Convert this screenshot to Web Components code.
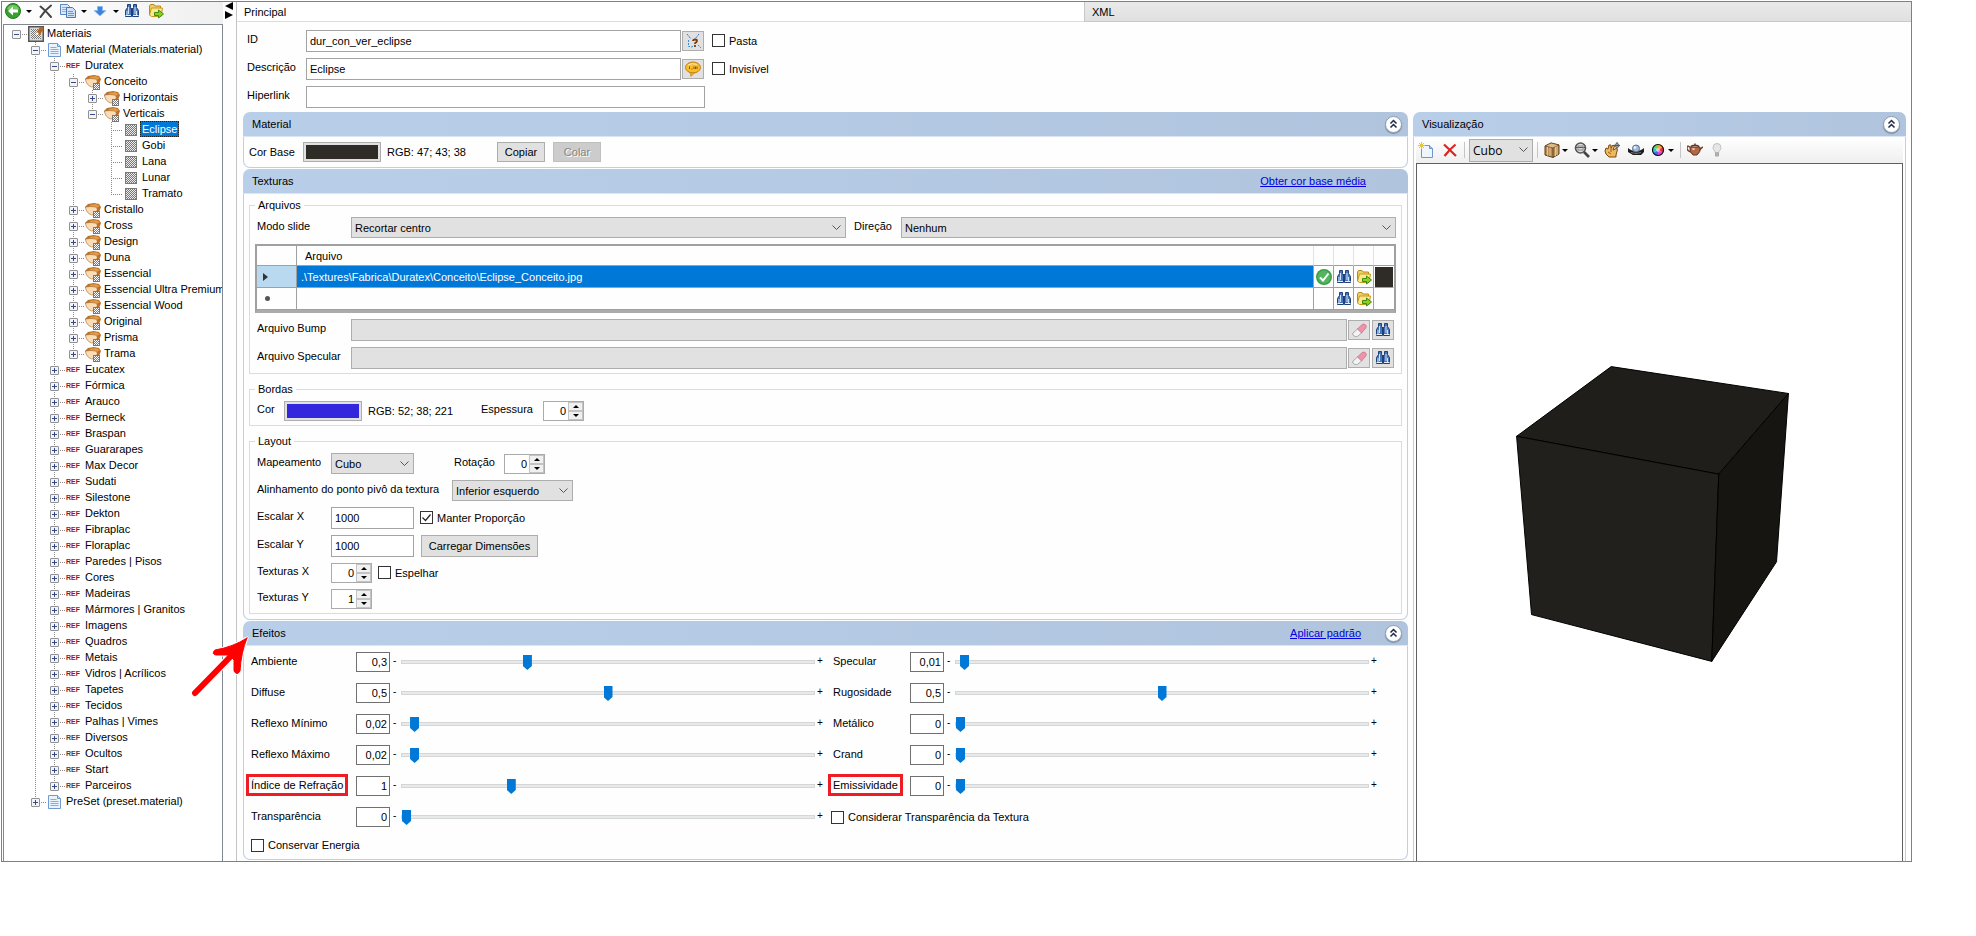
<!DOCTYPE html>
<html lang="pt-BR">
<head>
<meta charset="utf-8">
<title>Editor de materiais</title>
<style>
  html { background: #fff; }
  body { margin: 1px 64px 0 1px; font: 11px/14px "Liberation Sans", Arial, sans-serif; color: #000; }
</style>
</head>
<body>
<material-app></material-app>
<script>
const BINOCULARS = `<path d="M3.500 1.500h3v3l1 2v7h-6v-6l2-3z" fill="#4a76b8" stroke="#1d3f7a"/><path d="M9.500 1.500h3v3l2 3v6h-6v-7l1-2z" fill="#4a76b8" stroke="#1d3f7a"/><path d="M7 5h2v4H7z" fill="#1d3f7a"/><path d="M3 8v4M4.500 4v7M11 4v7M12.500 8v4" stroke="#cfe0f8" fill="none"/><path d="M1.500 12.500h5.500M9 12.500h5.500" stroke="#e8f0fb"/>`;
const FOLDER = `<path d="M1.500 12V3l1-1.500h3.500l1 1.500h5.500v9z" fill="#f0cf62" stroke="#b88a17"/><path d="M3.500 13.500l-2-1.500 2-7h11l-1.500 8.500z" fill="#fbe78d" stroke="#c59a20"/><path d="M6.500 9.500h4V7l5 4-5 4v-2.500h-4z" fill="#8bd01e" stroke="#3f8a10"/>`;
const CHECKER = `<g fill="#7d7d7d">` + Array.from({ length: 30 }, (_, i) => {
  const r = i % 6, c = Math.floor(i / 6); return `<rect x="${9 + r}" y="${10 + c}" width="1" height="1" opacity="${(r + c) % 2 ? 1 : 0}"/>`; }).join("") + `</g>`;
const ICONS = {
  back: `<circle cx="8" cy="8" r="7.500" fill="#35a12c" stroke="#1f7a1c"/><path d="M2 6a6.500 6.500 0 0 1 12 0q-6 3-12 0z" fill="#8fdc7c" opacity=".7"/><path d="M3 8l5-4.500v3h5v3H8v3z" fill="#fff"/>`,
  cross: `<path d="M2.500 3.500Q7 7 13 14M13 2.500Q7 7 2.500 14" stroke="#454545" stroke-width="2" fill="none" stroke-linecap="round"/>`,
  copy: `<path d="M.5 1.500h7l2 2v8h-9z" fill="#dce9fb" stroke="#5c87c4"/><path d="M2 4.500h5M2 6.500h6M2 8.500h6" stroke="#8fb0dc"/><path d="M6.500 4.500h6l3 3v7h-9z" fill="#cfe1f9" stroke="#4a78ba"/><path d="M8 8.500h5M8 10.500h6M8 12.500h6" stroke="#6f97cf"/>`,
  down: `<path d="M5.500 3.500h5v4h3.500L8 13 2 7.500h3.500z" fill="#3c84dc" stroke="#8dbbee"/>`,
  binoculars: BINOCULARS,
  folder: FOLDER,
  root: `<rect x=".75" y=".75" width="14.500" height="14.500" fill="#d8d8d8" stroke="#555" stroke-width="1.500"/><rect x="3" y="3" width="10" height="10" fill="url(#p)"/><path d="M8 7l4-6 4 1-4 7z" fill="#b5651d"/><path d="M7 9l2-3 2 2z" fill="#fff"/>`,
  doc: `<path d="M1.500 1.500h9l3 3v10h-12z" fill="#e9f2fd" stroke="#6f9bd0"/><path d="M10.500 1.500v3h3" fill="#b9d3f0" stroke="#6f9bd0"/><path d="M3.500 5.500h6M3.500 7.500h8M3.500 9.500h8M3.500 11.500h8" stroke="#86aedb"/>`,
  folderTex: `<path d="M0 5l3-3 6-1 5 1 2 3-2 5-6 2-5-2z" fill="#b8702a"/><path d="M4 3l7-1 4 2-5 3z" fill="#e39a45"/><path d="M.5 5q5-1 10 0l2 2-2 5-4 1Q1 11 .5 5z" fill="#fbdcb6" stroke="#a5682a" stroke-width=".6"/><rect x="8.500" y="9.500" width="6" height="6" fill="#fff" stroke="#777"/>${CHECKER}`,
  tex: `<rect x="2.500" y="2.500" width="11" height="11" fill="url(#p)" stroke="#7a7a7a"/>`,
  id: `<path d="M2 1l4 5M14 1l-4 5" stroke="#3c6fc0" stroke-dasharray="2 1" fill="none"/><path d="M3.500 7v6.500h3M13 12l3 3M8 13l-2 2" stroke="#3c8fd0" stroke-dasharray="2 1" fill="none"/><path d="M8 8q0-1.500 2-1.500T12 8q0 1-2 2.200v.8M10 12v2" stroke="#7a3b12" stroke-width="1.800" fill="none"/>`,
  speech: `<ellipse cx="8" cy="6.500" rx="7.500" ry="5.500" fill="#f7bd2d" stroke="#c07f12"/><path d="M5 11.500l1 4 4-4z" fill="#f0a91f" stroke="#c07f12" stroke-width=".6"/><path d="M3 4q4-2.500 9-.5" stroke="#fde9a4" fill="none"/><path d="M4.500 8V5.500M6.500 8h1M9 8V5.500M10.500 8V5.500M12 8V5.500" stroke="#9c4a10"/>`,
  ok: `<circle cx="8" cy="8" r="8" fill="#36a045"/><circle cx="8" cy="8" r="6.500" fill="#55b35f"/><path d="M4 8.500l3 3 5.500-7" stroke="#fff" stroke-width="2" fill="none"/>`,
  eraser: `<path d="M2 11l5-4.500 4 4L7 14q-1 1-3 .5L2 13q-1-1 0-2z" fill="#f3f3f3" stroke="#999" stroke-width=".8"/><path d="M6.500 7L11 2.500q2-1 3.500.3t.3 3.200L10.500 11z" fill="#ee93a8" stroke="#bd7a8a" stroke-width=".8"/>`,
  fresh: `<path d="M3.500 3.500h8l3 3v9h-11z" fill="#eef5fe" stroke="#6d96cc"/><path d="M11.500 3.500v3h3" fill="#9fc0ea" stroke="#6d96cc"/><path d="M3.500 0v7M0 3.500h7M1 1l5 5M6 1L1 6" stroke="#e5c63a"/>`,
  remove: `<path d="M2 2.500Q8 8 14 14M13.500 2.500Q8 7 2.500 14" stroke="#dd2222" stroke-width="2.200" fill="none"/>`,
  box: `<path d="M1 4l6-3 8 2v9l-6 3.500L1 13z" fill="#b98d55" stroke="#5c4020"/><path d="M1 4l8 2 6-3-8-2z" fill="#e0bd86" stroke="#5c4020" stroke-width=".7"/><path d="M9 6v9.500" stroke="#5c4020"/><path d="M3.500 5v8.500M6 5.500V14M11.500 5v9M13 4v9" stroke="#e3c596"/>`,
  zoom: `<circle cx="6.500" cy="6" r="5" fill="#dcdcdc" stroke="#555" stroke-width="1.600"/><path d="M10 10l5 5" stroke="#444" stroke-width="2.600"/><path d="M2 5.500h9" stroke="#c22"/><rect x="4" y="4" width="5" height="4" fill="none" stroke="#888"/>`,
  hand: `<path d="M1 9l1-3 2 1 1-4 2 0 0 3 2-3 1.500 1L9 8l3-1.500 1.500 1L12 13v2H5l-3-3z" fill="#edb85f" stroke="#7a4a12"/><path d="M4 10l3 2M7 6l0 4" stroke="#9a6424" fill="none"/><path d="M13 0v7M9.500 3.500h6.500" stroke="#555" fill="none"/><circle cx="13" cy="3.500" r="2" fill="none" stroke="#666"/>`,
  orbit: `<path d="M0 6q3 3 8 3t8-3v4l-3 3H5L0 10z" fill="#1d1d1d"/><circle cx="8" cy="6.500" r="3.500" fill="#9fb9da" stroke="#57718f"/><circle cx="7" cy="5.500" r="1.300" fill="#eef5ff"/><path d="M3 10.500q5 2 10 0" stroke="#777" fill="none"/>`,
  wheel: `<path d="M8 8V2a6 6 0 0 1 5.200 3z" fill="#f7a23a"/><path d="M8 8l5.200-3a6 6 0 0 1 0 6z" fill="#ee3344"/><path d="M8 8l5.200 3A6 6 0 0 1 8 14z" fill="#d94adf"/><path d="M8 8v6a6 6 0 0 1-5.200-3z" fill="#4668f0"/><path d="M8 8l-5.200 3a6 6 0 0 1 0-6z" fill="#35c5c9"/><path d="M8 8L2.800 5A6 6 0 0 1 8 2z" fill="#6bd25c"/><circle cx="8" cy="8" r="2" fill="#fff" opacity=".5"/><circle cx="8" cy="8" r="5.500" fill="none" stroke="#111" stroke-width="1.200"/>`,
  teapot: `<path d="M3 5q-3-2-3 1t4 4M12 9q2-3 4-4" stroke="#7c4028" stroke-width="1.500" fill="none"/><path d="M3 5h10q1 5-3 8H6Q2 10 3 5z" fill="#b06a48" stroke="#6b3520"/><path d="M4 4.500q4-2.500 8 0M8 1.500v1.500" stroke="#6b3520" stroke-width="1.500" fill="none"/><ellipse cx="6.500" cy="7" rx="1.500" ry="1" fill="#eec4aa"/>`,
  bulb: `<path d="M8 1.500q4 0 4 4 0 2-2 4v1H6v-1Q4 7.500 4 5.500q0-4 4-4z" fill="#e6e6e6" stroke="#c0c0c0"/><path d="M6.500 11h3v3h-3z" fill="#b5b5b5" stroke="#a5a5a5"/>`,
};
const CHECKER_DEF = `<defs><pattern id="p" width="2" height="2" patternUnits="userSpaceOnUse"><rect width="2" height="2" fill="#ececec"/><rect width="1" height="1" fill="#777"/><rect x="1" y="1" width="1" height="1" fill="#777"/></pattern></defs>`;

const CHEVRON = `url("data:image/svg+xml,%3Csvg xmlns='http://www.w3.org/2000/svg' width='9' height='6'%3E%3Cpath d='M.5 .5l4 4 4-4' fill='none' stroke='%23555'/%3E%3C/svg%3E")`;
const TICK = `url("data:image/svg+xml,%3Csvg xmlns='http://www.w3.org/2000/svg' width='11' height='11'%3E%3Cpath d='M1.500 5.500l3 3 5-6' fill='none' stroke='%23222' stroke-width='1.200'/%3E%3C/svg%3E")`;

const CONTROLS = `
  * { box-sizing: border-box; }
  input, select, button { font: inherit; color: inherit; margin: 0; border-radius: 0; }
  input[type=text] { height: 22px; min-width: 0; padding: 0 3px; border: 1px solid #a3a3a3; background: #fff; outline: 0; }
  input[type=text]:disabled { background: #e1e1e1; border-color: #adadad; }
  select { appearance: none; height: 21px; min-width: 0; padding: 0 20px 0 3px; border: 1px solid #adadad;
    background: #e1e1e1 ${CHEVRON} no-repeat right 4px center; }
  button { height: 20px; padding: 0; border: 1px solid #adadad; background: #e1e1e1; }
  button:disabled { background: #ccc; border-color: #bfbfbf; color: #838383; text-shadow: 1px 1px #fff; }
  button.icon { width: 22px; display: grid; place-items: center; }
  input[type=checkbox] { appearance: none; width: 13px; height: 13px; border: 1px solid #333; background: #fff; flex: none; }
  input[type=checkbox]:checked { background: #fff ${TICK} center no-repeat; }
  input[type=color] { appearance: none; width: 78px; height: 20px; padding: 2px; border: 1px solid #adadad; background: #e1e1e1; }
  input[type=color]::-webkit-color-swatch-wrapper { padding: 0; }
  input[type=color]::-webkit-color-swatch { border: 0; border-radius: 0; }
  .check { display: flex; align-items: center; gap: 4px; white-space: nowrap; }
  .row { display: flex; align-items: center; }
  .row > label:not(.check) { padding-bottom: 4px; white-space: nowrap; flex: none; }
  a { color: #0000e0; }
`;

function define(name, css, html, setup) {
  const tpl = document.createElement("template");
  customElements.define(name, class extends HTMLElement {
    connectedCallback() {
      if (this.shadowRoot) return;
      const root = this.attachShadow({ mode: "open" });
      tpl.innerHTML = `<style>${css}</style>${typeof html === "function" ? html(this) : html}`;
      root.append(tpl.content.cloneNode(true));
      if (setup) setup(this, root);
    }
  });
}
const attr = (el, name, fallback = "") => el.getAttribute(name) ?? fallback;

define("ui-icon",
  `:host { display: block; width: 16px; height: 16px; flex: none; } svg { display: block; }`,
  el => `<svg width="16" height="16" viewBox="0 0 16 16" aria-hidden="true">${CHECKER_DEF}${ICONS[attr(el, "name")]}</svg>`);

/* Small button of a tool bar, with an optional drop-down arrow */
define("tool-button",
  `:host { display: flex; align-items: center; flex: none; }
   button { display: flex; align-items: center; gap: var(--arrow-gap, 5px); padding: 0; border: 0; background: none; }
   i { width: 0; border: 3px solid transparent; border-top-color: #000; border-bottom: 0; }`,
  el => `<button type="button" aria-label="${attr(el, "label")}"><ui-icon name="${attr(el, "icon")}"></ui-icon>${el.hasAttribute("menu") ? "<i></i>" : ""}</button>`);

define("collapse-button",
  `:host { display: block; }
   button { display: grid; place-items: center; width: 17px; height: 17px; padding: 0; border: 1px solid #8f9db0; border-radius: 50%; background: #fff; box-shadow: 0 1px 1px #7d8ca3; }`,
  `<button type="button" aria-label="Recolher"><svg width="9" height="10" viewBox="0 0 9 10"><path d="M1.500 4.500l3-3 3 3M1.500 8.500l3-3 3 3" fill="none" stroke="#1c2a44" stroke-width="1.500"/></svg></button>`);

/* Panel with a blue title bar */
define("panel-box",
  `:host { display: flex; flex-direction: column; box-sizing: border-box; }
   header { display: flex; align-items: center; box-sizing: border-box; height: 25px; padding: 0 6px 0 9px; border-bottom: 1px solid #dce6f2;
     border-radius: 7px 7px 0 0; background: linear-gradient(90deg, #b9cfe9, #b0c4de); }
   h2 { margin: 0; font: inherit; flex: 1; }
   .body { flex: 1; display: flex; flex-direction: column; border: 1px solid #bdd0e4; border-top: 0; border-radius: 0 0 7px 7px; }
   :host([flush]) .body { border-bottom: 0; border-radius: 0; }
   .end { width: 17px; margin-left: 24px; }
   :host([fixed]) .end { margin-left: 19px; }`,
  el => `<header><h2>${attr(el, "heading")}</h2><slot name="link"></slot><div class="end">${el.hasAttribute("fixed") ? "" : "<collapse-button></collapse-button>"}</div></header><div class="body"><slot></slot></div>`);

/* Framed group with a legend */
define("group-box",
  `fieldset { min-width: 0; margin: 0; padding: 5px 5px 4px; border: 1px solid #dcdcdc; display: block; }
   :host { display: block; }
   legend { padding: 0 3px; margin: 0; }
   .rows { display: flex; flex-direction: column; gap: 6px; }`,
  el => `<fieldset><legend>${attr(el, "legend")}</legend><div class="rows"><slot></slot></div></fieldset>`);

define("spin-box",
  `${CONTROLS}
   :host { display: flex; align-items: center; height: 20px; }
   label { width: var(--label-width, auto); padding-bottom: 4px; flex: none; }
   .box { display: flex; width: 41px; height: 20px; border: 1px solid #ababab; background: #fff; }
   .box input { flex: 1; height: 18px; border: 0; padding: 0 2px 0 0; text-align: right; }
   .steps { display: grid; grid-template-rows: 1fr 1fr; width: 15px; }
   .steps button { display: grid; place-items: center; height: 9px; border: 1px solid #c3c3c3; background: #f0f0f0; }
   i { width: 0; border: 3px solid transparent; }
   .u { border-top: 0; border-bottom-color: #000; } .d { border-bottom: 0; border-top-color: #000; }`,
  el => `<label for="v">${attr(el, "label")}</label><div class="box"><input id="v" type="text" value="${attr(el, "value")}"><div class="steps"><button type="button" aria-label="Aumentar"><i class="u"></i></button><button type="button" aria-label="Diminuir"><i class="d"></i></button></div></div>`,
  (el, root) => {
    const input = root.querySelector("input");
    root.querySelectorAll("button").forEach((b, i) => b.onclick = () => { input.value = +input.value + (i ? -1 : 1); });
  });

/* Label, value box and slider of one effect */
define("effect-slider",
  `${CONTROLS}
   :host { display: flex; align-items: center; height: 20px; }
   .name { width: var(--name-width); flex: none; padding-bottom: 2px; }
   :host([marked]) label { outline: 3px solid #ee1c24; outline-offset: 2px; }
   label { white-space: nowrap; }
   input[type=text] { width: 34px; height: 20px; flex: none; border-color: #707070; text-align: right; padding: 0 2px; }
   .sign { width: 11px; flex: none; padding: 0 0 3px 3px; font-size: 10px; } .plus { width: 7px; padding-left: 2px; }
   input[type=range] { appearance: none; flex: 1; min-width: 0; height: 20px; background: none; }
   input[type=range]::-webkit-slider-runnable-track { height: 4px; border: 1px solid #d6d6d6; background: #e7eaea; }
   input[type=range]::-webkit-slider-thumb { appearance: none; width: 9px; height: 15px; margin-top: -6px; background: #0078d7;
     clip-path: polygon(0 0, 100% 0, 100% 73%, 50% 100%, 0 73%); }`,
  el => `<span class="name"><label for="v">${attr(el, "label")}</label></span><input id="v" type="text" value="${attr(el, "value")}"><span class="sign">-</span><input type="range" min="0" max="100" value="${attr(el, "at")}" aria-label="${attr(el, "label")}"><span class="sign plus">+</span>`);

define("tree-item",
  `:host { display: block; --dots: linear-gradient(#8a8a8a 50%, transparent 0) 0 0 / 1px 2px; white-space: nowrap; }
   :host(:not([last])) { background: linear-gradient(#8a8a8a 50%, transparent 0) 9px 0 / 1px 2px repeat-y; }
   .row { display: flex; height: 16px; align-items: center; }
   .cell { display: grid; width: 19px; height: 16px; margin-right: 2px; place-items: center; flex: none; }
   .cell > * { grid-area: 1 / 1; }
   .v { place-self: start; width: 1px; height: 8px; margin-left: 9px; background: var(--dots); }
   :host([root]) .v { visibility: hidden; }
   .h { place-self: start end; width: 12px; height: 1px; margin: 8px -2px 0 0; background: linear-gradient(90deg, #8a8a8a 50%, transparent 0) 0 0 / 2px 1px; }
   button { box-sizing: border-box; width: 9px; height: 9px; padding: 0; border: 1px solid #919191; border-radius: 1px; background:
     linear-gradient(#334a8c, #334a8c) center / 5px 1px no-repeat, linear-gradient(#334a8c, #334a8c) center / 1px var(--plus, 5px) no-repeat, #f4f4f4; margin: 1px 0 0; z-index: 1; }
   :host([open]) button { --plus: 1px; }
   .ref { width: 16px; font-size: 7px; line-height: 16px; color: #a8101c; flex: none; font-weight: bold; }
   .ref.dark { color: #444; }
   .text { margin: 0 0 2px 1px; padding: 0 2px; line-height: 16px; }
   :host([selected]) .text { background: #0078d7; color: #fff; outline: 1px dotted #222; outline-offset: -1px; }
   .kids { margin-left: 19px; }`,
  el => {
    const icon = attr(el, "icon");
    const picture = icon.startsWith("ref") ? `<span class="ref ${icon === "ref" ? "" : "dark"}">REF</span>` : `<ui-icon name="${icon}"></ui-icon>`;
    return `<div class="row"><span class="cell"><i class="v"></i><i class="h"></i>${el.hasAttribute("leaf") ? "" : `<button type="button" aria-label="Expandir"></button>`}</span>${picture}<span class="text">${attr(el, "label")}</span></div><div class="kids"><slot></slot></div>`;
  });

define("material-tree",
  `:host { display: block; flex: 1; border: 1px solid #828790; border-bottom: 0; background: #fff; padding: 1px 0 8px 3px; overflow: hidden; min-width: 0; }`,
  "", (el, root) => {
    const add = (parent, list) => list.forEach((n, i) => {
      const [label, icon, kids, flags = ""] = n;
      const item = document.createElement("tree-item");
      item.setAttribute("label", label);
      item.setAttribute("icon", icon);
      if (i === list.length - 1) item.setAttribute("last", "");
      if (kids) { item.setAttribute("open", ""); add(item, kids); }
      flags.split(" ").filter(Boolean).forEach(f => item.setAttribute(f, ""));
      parent.append(item);
    });
    const many = (icon, names, flags) => names.map(n => [n, icon, null, flags]);
    const leaves = many("tex", ["Eclipse", "Gobi", "Lana", "Lunar", "Tramato"], "leaf");
    leaves[0][3] = "leaf selected";
    add(root, [["Materiais", "root", [
      ["Material (Materials.material)", "doc", [
        ["Duratex", "ref", [
          ["Conceito", "folderTex", [["Horizontais", "folderTex"], ["Verticais", "folderTex", leaves]]],
          ...many("folderTex", ["Cristallo", "Cross", "Design", "Duna", "Essencial", "Essencial Ultra Premium", "Essencial Wood", "Original", "Prisma", "Trama"]),
        ]],
        ...many("ref", ["Eucatex", "Fórmica", "Arauco", "Berneck", "Braspan", "Guararapes", "Max Decor", "Sudati", "Silestone", "Dekton", "Fibraplac", "Floraplac", "Paredes | Pisos", "Cores", "Madeiras", "Mármores | Granitos", "Imagens", "Quadros", "Metais", "Vidros | Acrílicos", "Tapetes", "Tecidos", "Palhas | Vimes"]),
        ...many("refDark", ["Diversos", "Ocultos", "Start", "Parceiros"]),
      ]],
      ["PreSet (preset.material)", "doc"],
    ], "root"]]);
  });

define("side-panel",
  `:host { display: flex; flex-direction: column; min-width: 0; }
   nav { display: flex; align-items: center; box-sizing: border-box; height: 22px; padding: 0 2px 4px; background: linear-gradient(90deg, #fff, #f0f0f0); }
   .a { margin-right: 6px; } .c { margin-right: 5px; } .d { margin-right: 8px; }`,
  `<nav><tool-button icon="back" menu label="Adicionar" class="a"></tool-button><tool-button icon="cross" label="Excluir" class="a"></tool-button><tool-button icon="copy" menu label="Copiar" class="c"></tool-button><tool-button icon="down" menu label="Mover" class="c"></tool-button><tool-button icon="binoculars" label="Localizar" class="d"></tool-button><tool-button icon="folder" label="Abrir"></tool-button></nav><material-tree></material-tree>`);

define("identity-form",
  `${CONTROLS}
   :host { display: grid; gap: 6px; padding: 8px 10px 4px; }
   .row > label:not(.check) { width: 59px; }
   .row > label.check { padding-bottom: 1px; }
   input[type=text] { width: 375px; }
   input[type=text].wide { width: 399px; }
   button.icon { margin: 0 8px 0 1px; }`,
  `<div class="row"><label for="id">ID</label><input type="text" id="id" value="dur_con_ver_eclipse"><button type="button" class="icon" aria-label="Gerar ID"><ui-icon name="id"></ui-icon></button><label class="check"><input type="checkbox">Pasta</label></div>
   <div class="row"><label for="de">Descrição</label><input type="text" id="de" value="Eclipse"><button type="button" class="icon" aria-label="Traduções"><ui-icon name="speech"></ui-icon></button><label class="check"><input type="checkbox">Invisível</label></div>
   <div class="row"><label for="hi">Hiperlink</label><input type="text" id="hi" class="wide"></div>`);

define("material-section",
  `${CONTROLS}
   :host { display: block; }
   .row { padding: 5px; } .row > label:not(.check) { width: 54px; padding: 0; }
   output { width: 116px; padding-left: 6px; }
   button { width: 48px; margin-right: 8px; }`,
  `<panel-box heading="Material"><div class="row"><label for="c">Cor Base</label><input type="color" id="c" value="#2f2b26"><output for="c">RGB: 47; 43; 38</output><button type="button">Copiar</button><button type="button" disabled>Colar</button></div></panel-box>`);

define("file-table",
  `${CONTROLS}
   :host { display: block; border: 2px solid #a0a0a0; border-bottom: 3px solid #ababab; }
   table { width: 100%; table-layout: fixed; border-collapse: separate; border-spacing: 0; }
   th, td { height: 22px; padding: 0 0 0 4px; border: solid #a0a0a0; border-width: 0 1px 1px 0; text-align: left; font-weight: normal; }
   thead th { height: 20px; padding-left: 8px; } thead th:nth-child(n+2) { border-right-color: #e2e2e2; }
   tr > :last-child { border-right: 0; }
   td.t { padding: 0; }
   td.t button { display: grid; place-items: center; width: 19px; height: 21px; border: 0; background: none; }
   .sel th { background: #b9d9f1; } .sel .f { background: #0078d7; color: #fff; }
   .sel .color { background: #2f2b26; border: 1px solid #fff; border-bottom-color: #a0a0a0; }
   .arrow { display: block; width: 0; border: 4px solid transparent; border-left: 5px solid #333; border-right: 0; margin-left: 2px; }
   .star { display: block; width: 5px; height: 5px; border-radius: 50%; background: #555; margin-left: 4px; }`,
  () => {
    const tools = `<td class="t"><button type="button" aria-label="Localizar"><ui-icon name="binoculars"></ui-icon></button></td><td class="t"><button type="button" aria-label="Abrir pasta"><ui-icon name="folder"></ui-icon></button></td>`;
    return `<table><colgroup><col style="width:40px"><col><col style="width:20px"><col style="width:20px"><col style="width:20px"><col style="width:20px"></colgroup>
    <thead><tr><th></th><th>Arquivo</th><th></th><th></th><th></th><th></th></tr></thead>
    <tbody><tr class="sel"><th><i class="arrow"></i></th><td class="f">.\\Textures\\Fabrica\\Duratex\\Conceito\\Eclipse_Conceito.jpg</td><td class="t"><button type="button" aria-label="Válido"><ui-icon name="ok"></ui-icon></button></td>${tools}<td class="color"></td></tr>
    <tr><th><i class="star"></i></th><td></td><td></td>${tools}<td></td></tr></tbody></table>`;
  });

define("textures-section",
  `${CONTROLS}
   :host { display: block; }
   .groups { display: grid; gap: 8px; padding: 4px 5px 5px; }
   .row > label.n:not(.check) { width: 96px; padding-left: 2px; }
   .grow { flex: 1; }
   .file .icon + .icon { margin-left: 2px; } .file input { margin-right: 1px; } .file { padding-right: 2px; }
   .row > label.dir { margin: 0 10px 0 8px; width: 37px; }
   .row > label.m:not(.check) { width: 76px; padding-left: 2px; }
   .row > label.piv:not(.check) { width: 197px; padding-left: 2px; }
   .row > label.cor:not(.check) { width: 29px; padding-left: 2px; }
   output { width: 119px; padding-left: 6px; }
   .short { width: 83px; margin-right: 6px; }
   .pivot { width: 121px; }
   .load { width: 117px; height: 22px; margin-left: 1px; }
   .row > label.check { padding-bottom: 1px; }
   spin-box.first { --label-width: 74px; padding: 0 6px 0 2px; }
   spin-box.esp { --label-width: 62px; } spin-box.rot { --label-width: 50px; margin-left: 34px; }`,
  `<panel-box heading="Texturas" fixed>
    <a slot="link" href="#media">Obter cor base média</a>
    <div class="groups">
      <group-box legend="Arquivos">
        <div class="row"><label class="n" for="modo">Modo slide</label><select id="modo" class="grow"><option>Recortar centro</option></select><label class="dir" for="dir">Direção</label><select id="dir" class="grow"><option>Nenhum</option></select></div>
        <file-table></file-table>
        <div class="row file"><label class="n" for="bump">Arquivo Bump</label><input type="text" id="bump" class="grow" disabled><button type="button" class="icon" aria-label="Limpar"><ui-icon name="eraser"></ui-icon></button><button type="button" class="icon" aria-label="Localizar"><ui-icon name="binoculars"></ui-icon></button></div>
        <div class="row file"><label class="n" for="spec">Arquivo Specular</label><input type="text" id="spec" class="grow" disabled><button type="button" class="icon" aria-label="Limpar"><ui-icon name="eraser"></ui-icon></button><button type="button" class="icon" aria-label="Localizar"><ui-icon name="binoculars"></ui-icon></button></div>
      </group-box>
      <group-box legend="Bordas">
        <div class="row"><label class="cor" for="cor">Cor</label><input type="color" id="cor" value="#3426dd"><output for="cor">RGB: 52; 38; 221</output><spin-box class="esp" label="Espessura" value="0"></spin-box></div>
      </group-box>
      <group-box legend="Layout">
        <div class="row"><label class="m" for="map">Mapeamento</label><select id="map" class="short"><option>Cubo</option></select><spin-box class="rot" label="Rotação" value="0"></spin-box></div>
        <div class="row"><label class="piv" for="piv">Alinhamento do ponto pivô da textura</label><select id="piv" class="pivot"><option>Inferior esquerdo</option></select></div>
        <div class="row"><label class="m" for="ex">Escalar X</label><input type="text" id="ex" class="short" value="1000"><label class="check"><input type="checkbox" checked>Manter Proporção</label></div>
        <div class="row"><label class="m" for="ey">Escalar Y</label><input type="text" id="ey" class="short" value="1000"><button type="button" class="load">Carregar Dimensões</button></div>
        <div class="row"><spin-box class="first" label="Texturas X" value="0"></spin-box><label class="check"><input type="checkbox">Espelhar</label></div>
        <div class="row"><spin-box class="first" label="Texturas Y" value="1"></spin-box></div>
      </group-box>
    </div>
  </panel-box>`);

define("effects-section",
  `${CONTROLS}
   :host { display: block; position: relative; }
   .cols { display: flex; gap: 11px; padding: 6px 31px 7px 7px; }
   .cols > div { display: grid; gap: 11px; align-content: start; min-width: 0; }
   .l { --name-width: 105px; flex: 1 1 157px; } .r { --name-width: 77px; flex: 1 1 129px; }
   .check.six { height: 20px; margin-left: -2px; } .check.last { height: 14px; }
   .pointer { position: absolute; left: -52px; top: 14px; pointer-events: none; }`,
  `<panel-box heading="Efeitos">
    <a slot="link" href="#padrao">Aplicar padrão</a>
    <div class="cols">
      <div class="l">
        <effect-slider label="Ambiente" value="0,3" at="30"></effect-slider>
        <effect-slider label="Diffuse" value="0,5" at="50"></effect-slider>
        <effect-slider label="Reflexo Mínimo" value="0,02" at="2"></effect-slider>
        <effect-slider label="Reflexo Máximo" value="0,02" at="2"></effect-slider>
        <effect-slider label="Índice de Refração" value="1" at="26" marked></effect-slider>
        <effect-slider label="Transparência" value="0" at="0"></effect-slider>
        <label class="check last"><input type="checkbox">Conservar Energia</label>
      </div>
      <div class="r">
        <effect-slider label="Specular" value="0,01" at="1"></effect-slider>
        <effect-slider label="Rugosidade" value="0,5" at="50"></effect-slider>
        <effect-slider label="Metálico" value="0" at="0"></effect-slider>
        <effect-slider label="Crand" value="0" at="0"></effect-slider>
        <effect-slider label="Emissividade" value="0" at="0" marked></effect-slider>
        <label class="check six"><input type="checkbox">Considerar Transparência da Textura</label>
      </div>
    </div>
  </panel-box>
  <svg class="pointer" width="60" height="64" viewBox="0 0 60 64" aria-hidden="true"><g stroke="#fff" stroke-linecap="round" stroke-linejoin="round" fill="#fff"><path d="M4 58L42 19" stroke-width="8"/><path id="head" d="M56 3Q42 12 24 15Q20 19 25 20L38 20L43 25L43 36Q46 41 49 36Q50 18 56 3z" stroke-width="3"/></g><g fill="#f00" stroke="#f00" stroke-linecap="round"><path d="M4 58L42 19" stroke-width="6"/><path d="M56 3Q42 12 24 15Q20 19 25 20L38 20L43 25L43 36Q46 41 49 36Q50 18 56 3z" stroke-linejoin="round" stroke-width="1"/></g></svg>`);

define("preview-section",
  `${CONTROLS}
   :host { display: flex; }
   panel-box { flex: 1; min-width: 0; }
   .bar { display: flex; align-items: center; height: 26px; margin: 0 2px; padding: 0 2px; gap: 6px; background: linear-gradient(#fff, #efefef); --arrow-gap: 2px; }
   .wide { margin-right: 2px; }
   select { width: 64px; height: 23px; font: 12px "Open Sans", sans-serif; padding-right: 10px; margin: 0 -2px; }
   hr { width: 1px; height: 16px; margin: 0; border: 0; background: #c5c5c5; }
   .view { flex: 1; display: flex; margin: 0 2px; border: 1px solid #606060; border-bottom: 0; background: #fff; min-height: 300px; }
   svg.cube { flex: 1; width: 100%; height: 0; min-height: 100%; }`,
  `<panel-box heading="Visualização" flush>
    <div class="bar">
      <tool-button icon="fresh" label="Novo" class="wide"></tool-button><tool-button icon="remove" label="Remover"></tool-button><hr>
      <select aria-label="Forma"><option>Cubo</option></select><hr>
      <tool-button icon="box" menu label="Vista"></tool-button><tool-button icon="zoom" menu label="Zoom"></tool-button><tool-button icon="hand" label="Mover" class="wide"></tool-button><tool-button icon="orbit" label="Orbitar"></tool-button><tool-button icon="wheel" menu label="Cores"></tool-button><hr>
      <tool-button icon="teapot" label="Renderizar"></tool-button><tool-button icon="bulb" label="Luz"></tool-button>
    </div>
    <div class="view"><svg class="cube" viewBox="0 0 487 697" role="img" aria-label="Cubo"><g stroke="#000" stroke-linejoin="round"><path d="M100 272L195 202L373 229L303 310z" fill="#1f1e1a"/><path d="M100 272L303 310L296 498L115 451z" fill="#21201c"/><path d="M303 310L373 229L361 398L296 498z" fill="#161511"/></g></svg></div>
  </panel-box>`);

define("tab-strip",
  `:host { display: grid; grid-template-columns: 847fr 827fr; height: 20px; }
   button { font: inherit; text-align: left; padding: 0 7px; border: 0; border-bottom: 1px solid #dcdcdc; background: #fff; }
   button + button { background: linear-gradient(#eaeaea, #e0e0e0); border-left: 1px solid #c8c8c8; border-bottom-color: #c8c8c8; }`,
  `<button type="button" role="tab" aria-selected="true">Principal</button><button type="button" role="tab" aria-selected="false">XML</button>`);

define("material-app",
  `:host { display: grid; grid-template-columns: 220px 13px minmax(0, 1fr); border: 1px solid #808080; padding-left: 1px; background: #fefefe; }
   .split { display: grid; align-content: start; padding: 0 2px; gap: 1px; }
   .split i { width: 0; border: 4px solid transparent; }
   .split .left { border-right: 8px solid #000; border-left: 0; } .split .right { border-left: 8px solid #000; border-right: 0; }
   main { display: flex; flex-direction: column; border-left: 1px solid #c4c4c4; min-width: 0; }
   .work { flex: 1; display: grid; grid-template-columns: minmax(0, 1165fr) minmax(0, 493fr); gap: 5px; padding: 0 5px 0 6px; }
   .stack { display: grid; gap: 1px; align-content: start; padding-bottom: 1px; min-width: 0; }`,
  `<side-panel></side-panel>
   <div class="split"><i class="left"></i><i class="right"></i></div>
   <main><tab-strip></tab-strip><identity-form></identity-form>
     <div class="work"><div class="stack"><material-section></material-section><textures-section></textures-section><effects-section></effects-section></div><preview-section></preview-section></div>
   </main>`);
</script>
</body>
</html>
